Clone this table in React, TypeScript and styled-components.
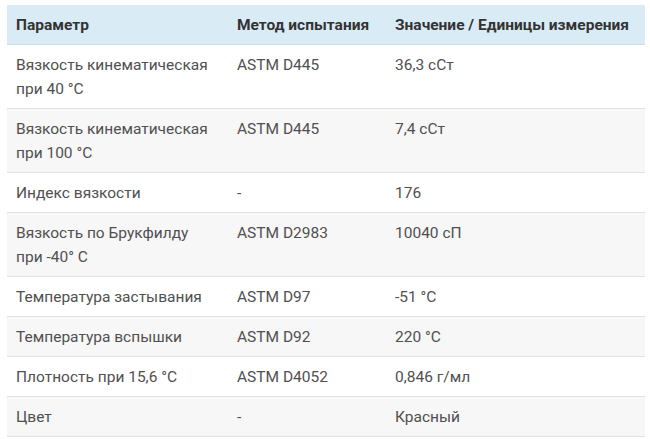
import styled, { createGlobalStyle } from "styled-components";

const GlobalStyle = createGlobalStyle`
  body {
    margin: 0;
    background: #ffffff;
    font-family: Roboto, "Noto Sans", Arial, sans-serif;
  }
`;

const Wrapper = styled.div`
  padding: 5px 5px 0 7px;
`;

const Table = styled.table`
  width: 638px;
  border-collapse: collapse;
  table-layout: fixed;
  font-size: 15.5px;
  line-height: 24px;
`;

const HeadCell = styled.th<{ $w: number }>`
  box-sizing: border-box;
  width: ${(p) => p.$w}px;
  text-align: left;
  font-weight: 700;
  color: #333333;
  background: #d9ecf6;
  padding: 8px 9px 7px;
  border-bottom: 1px solid #cfdde4;
  white-space: nowrap;
`;

const Row = styled.tr<{ $alt: boolean }>`
  background: ${(p) => (p.$alt ? "#f7f7f7" : "#ffffff")};
  border-bottom: 1px solid #e2e2e2;
`;

const Cell = styled.td`
  box-sizing: border-box;
  vertical-align: top;
  color: #505050;
  padding: 8px 14px 7px 9px;
`;

const rows: [string, string, string][] = [
  ["Вязкость кинематическая при 40 °С", "ASTM D445", "36,3 сСт"],
  ["Вязкость кинематическая при 100 °С", "ASTM D445", "7,4 сСт"],
  ["Индекс вязкости", "-", "176"],
  ["Вязкость по Брукфилду при -40° С", "ASTM D2983", "10040 сП"],
  ["Температура застывания", "ASTM D97", "-51 °C"],
  ["Температура вспышки", "ASTM D92", "220 °C"],
  ["Плотность при 15,6 °С", "ASTM D4052", "0,846 г/мл"],
  ["Цвет", "-", "Красный"],
];

export default function App() {
  return (
    <Wrapper>
      <GlobalStyle />
      <Table>
        <thead>
          <tr>
            <HeadCell $w={221}>Параметр</HeadCell>
            <HeadCell $w={158}>Метод испытания</HeadCell>
            <HeadCell $w={259}>Значение / Единицы измерения</HeadCell>
          </tr>
        </thead>
        <tbody>
          {rows.map((r, i) => (
            <Row key={i} $alt={i % 2 === 1}>
              <Cell>{r[0]}</Cell>
              <Cell>{r[1]}</Cell>
              <Cell>{r[2]}</Cell>
            </Row>
          ))}
        </tbody>
      </Table>
    </Wrapper>
  );
}
